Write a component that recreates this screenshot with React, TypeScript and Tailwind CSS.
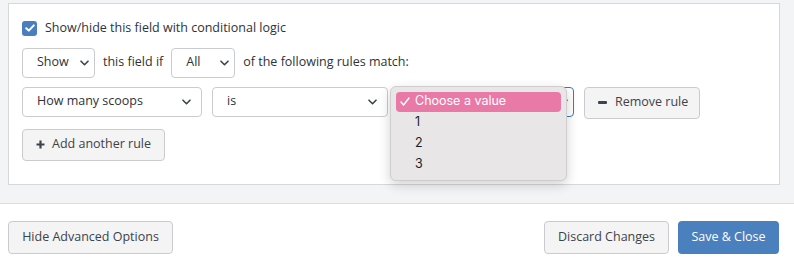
import React from "react";

const Chevron = () => (
  <svg width="9" height="6" viewBox="0 0 9 6" className="shrink-0">
    <path d="M1 1.2l3.5 3.5 3.5-3.5" fill="none" stroke="#3c434a" strokeWidth="1.6" strokeLinecap="round" strokeLinejoin="round" />
  </svg>
);

type SelectProps = {
  label: string;
  className?: string;
  focused?: boolean;
};

const FakeSelect = ({ label, className, focused }: SelectProps) => (
  <div
    className={
      "flex h-[30px] items-center justify-between rounded-[4px] border bg-white pl-[14px] pr-[5px] text-[12.5px] text-[#2c3338] " +
      (focused ? "border-[#3a78c3] " : "border-[#c9cccf] ") +
      (className || "")
    }
  >
    <span>{label}</span>
    <Chevron />
  </div>
);

const options = ["1", "2", "3"];

export default function App() {
  return (
    <div className="h-[263px] w-[794px] bg-white font-['Open_Sans',sans-serif] text-[#2c3338]">
      <div className="h-[204px] border-b border-[#dcdcde] bg-[#f3f4f5] pl-[8px] pr-[14px] pt-[3px]">
        <div className="h-[182px] border border-[#d6d8da] bg-white px-[13px] pt-[15px]">
          <label className="flex items-center gap-[8px] text-[12.5px]">
            <span className="flex h-[15px] w-[15px] items-center justify-center rounded-[3px] bg-[#4a7ebd]">
              <svg width="10" height="8" viewBox="0 0 10 8">
                <path d="M1.2 4.2l2.6 2.4L8.8 1.4" fill="none" stroke="white" strokeWidth="2" strokeLinecap="round" strokeLinejoin="round" />
              </svg>
            </span>
            Show/hide this field with conditional logic
          </label>

          <div className="mt-[10px] flex items-center gap-[8px] text-[12.5px]">
            <FakeSelect label="Show" className="w-[73px]" />
            <span>this field if</span>
            <FakeSelect label="All" className="w-[64px]" />
            <span>of the following rules match:</span>
          </div>

          <div className="mt-[9px] flex items-start gap-[10px]">
            <FakeSelect label="How many scoops" className="w-[180px] pr-[10px]" />
            <FakeSelect label="is" className="w-[176px] pr-[10px]" />
            <div className="relative">
              <FakeSelect label="" className="w-[176px]" focused />
              <div className="absolute left-[-8px] top-[-1px] z-10 h-[95px] w-[177px] rounded-[6px] border border-[#cfcdcd] bg-[#e8e6e6] px-[5px] pt-[5px] font-['Inter',sans-serif] text-[12.5px] text-[#1d1d1f] shadow-[0_4px_12px_rgba(0,0,0,0.18)]">
                <div className="flex h-[20px] items-center gap-[5px] rounded-[4px] bg-[#e97aa8] pl-[4px] text-white">
                  <svg width="10" height="9" viewBox="0 0 10 9">
                    <path d="M1 5l2.6 3L9 1" fill="none" stroke="white" strokeWidth="1.4" strokeLinecap="round" strokeLinejoin="round" />
                  </svg>
                  <span>Choose a value</span>
                </div>
                {options.map((o) => (
                  <div key={o} className="flex h-[21px] items-center pl-[19px]">
                    {o}
                  </div>
                ))}
              </div>
            </div>
            <button className="flex h-[32px] w-[116px] items-center gap-[8px] rounded-[4px] border border-[#c9cccf] bg-[#f4f4f4] pl-[13px] text-[12.5px] text-[#3c434a]">
              <span className="h-[3px] w-[9px] rounded-[1px] bg-[#3c434a]" />
              Remove rule
            </button>
          </div>

          <button className="mt-[10px] flex h-[32px] w-[143px] items-center gap-[7px] rounded-[4px] border border-[#c9cccf] bg-[#f4f4f4] pl-[13px] text-[12.5px] text-[#3c434a]">
            <svg width="9" height="9" viewBox="0 0 9 9">
              <path d="M4.5 0.5v8M0.5 4.5h8" stroke="#3c434a" strokeWidth="2.2" />
            </svg>
            Add another rule
          </button>
        </div>
      </div>

      <div className="flex items-center justify-between pl-[8px] pr-[15px] pt-[17px]">
        <button className="h-[33px] w-[165px] rounded-[4px] border border-[#c9cccf] bg-[#f4f4f4] text-[12.5px] text-[#3c434a]">
          Hide Advanced Options
        </button>
        <div className="flex gap-[9px]">
          <button className="h-[33px] w-[125px] rounded-[4px] border border-[#c9cccf] bg-[#f4f4f4] text-[12.5px] text-[#3c434a]">
            Discard Changes
          </button>
          <button className="h-[33px] w-[101px] rounded-[4px] bg-[#4a80bd] text-[12.5px] text-white">
            Save &amp; Close
          </button>
        </div>
      </div>
    </div>
  );
}
